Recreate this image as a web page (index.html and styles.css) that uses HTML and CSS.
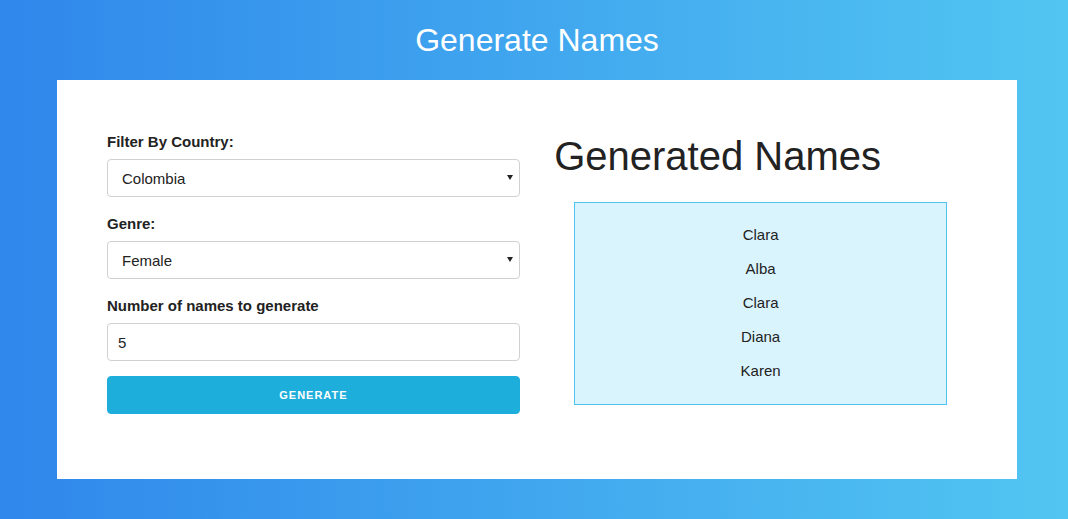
FILE: index.html
```html
<!DOCTYPE html>
<html lang="en">
<head>
<meta charset="utf-8">
<title>Generate Names</title>
<link rel="stylesheet" href="styles.css">
</head>
<body>
  <header class="top">
    <h2 class="top-title">Generate Names</h2>
  </header>
  <main class="card">
    <form class="col col-form">
      <label class="field-label" for="country">Filter By Country:</label>
      <div class="select-wrap">
        <select id="country" class="field">
          <option>Colombia</option>
        </select>
      </div>
      <label class="field-label" for="genre">Genre:</label>
      <div class="select-wrap">
        <select id="genre" class="field">
          <option>Female</option>
        </select>
      </div>
      <label class="field-label" for="amount">Number of names to generate</label>
      <input id="amount" class="field field-input" type="number" value="5">
      <button type="button" class="btn">Generate</button>
    </form>
    <section class="col col-result">
      <h1 class="result-title">Generated Names</h1>
      <ul class="names">
        <li>Clara</li>
        <li>Alba</li>
        <li>Clara</li>
        <li>Diana</li>
        <li>Karen</li>
      </ul>
    </section>
  </main>
</body>
</html>
```

FILE: styles.css
```css
* { box-sizing: border-box; }

html, body {
  margin: 0;
  padding: 0;
}

body {
  min-height: 519px;
  background: linear-gradient(to right, #2f87eb 0%, #52c6f2 100%);
  font-family: "Liberation Sans", Arial, sans-serif;
  font-size: 15px;
  line-height: 1.6;
  color: #222;
  padding: 0 0 40px 6px;
}

.top {
  height: 80px;
  display: flex;
  align-items: center;
  justify-content: center;
}

.top-title {
  margin: 0;
  font-size: 32px;
  font-weight: normal;
  color: #fff;
  line-height: 1.15;
  padding-top: 1px;
}

.card {
  width: 960px;
  margin: 0 auto;
  background: #fff;
  padding: 50px;
  display: flex;
  align-items: flex-start;
}

.col {
  width: 48%;
}

.col + .col {
  margin-left: 4%;
}

.col-form {
  margin: 0;
}

.field-label {
  display: block;
  font-weight: bold;
  margin-bottom: 5px;
  color: #222;
}

.select-wrap {
  position: relative;
  margin-bottom: 15px;
}

.select-wrap::after {
  content: "";
  position: absolute;
  right: 7px;
  top: 16px;
  border-left: 3.5px solid transparent;
  border-right: 3.5px solid transparent;
  border-top: 5px solid #222;
  pointer-events: none;
}

.field {
  display: block;
  width: 100%;
  height: 38px;
  border: 1px solid #d1d1d1;
  border-radius: 4px;
  background: #fff;
  font-family: inherit;
  font-size: 15px;
  color: #222;
  -webkit-appearance: none;
  appearance: none;
  outline: none;
}

select.field {
  padding: 0 24px 0 14px;
}

.field-input {
  padding: 6px 10px;
  margin-bottom: 15px;
  -moz-appearance: textfield;
}

.field-input::-webkit-outer-spin-button,
.field-input::-webkit-inner-spin-button {
  -webkit-appearance: none;
  margin: 0;
}

.btn {
  display: block;
  width: 100%;
  height: 38px;
  padding: 0 30px;
  border: 1px solid #1eaedb;
  border-radius: 4px;
  background: #1eaedb;
  color: #fff;
  font-family: inherit;
  font-size: 11px;
  font-weight: bold;
  letter-spacing: 1px;
  text-transform: uppercase;
  line-height: 36px;
  margin-bottom: 15px;
  cursor: pointer;
}

.result-title {
  margin: 2px 0 22px;
  font-size: 40px;
  font-weight: normal;
  line-height: 48px;
  color: #222;
}

.names {
  list-style: none;
  width: 90%;
  box-sizing: content-box;
  margin: 0 auto;
  padding: 20px 0 11px;
  background: #daf4fd;
  border: 1px solid #4fc3f0;
  text-align: center;
}

.names li {
  line-height: 24px;
  margin-bottom: 10px;
}
```
